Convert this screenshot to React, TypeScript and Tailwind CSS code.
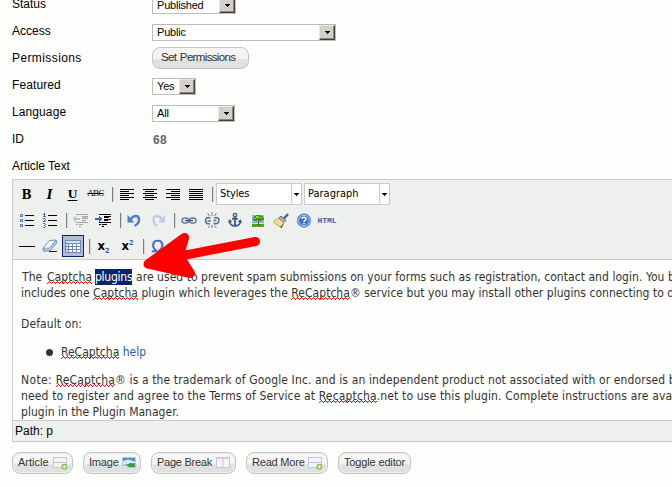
import type { ReactNode } from "react";

function Select({ value, className }: { value: string; className: string }) {
  return (
    <div className={`flex h-[17px] items-center border border-[#bdbdbd] bg-white pl-[4px] text-[11px] tracking-[-0.2px] text-black ${className}`}>
      <span className="flex-1">{value}</span>
      <span className="flex h-[15px] w-[16px] items-center justify-center border border-t-[#e8e6e0] border-l-[#e8e6e0] border-r-[#404040] border-b-[#404040] bg-[#d4d0c8] shadow-[inset_-1px_-1px_0_#87857f]">
        <svg width="5" height="3" viewBox="0 0 5 3" shapeRendering="crispEdges"><path d="M0 0h5v1H0zM1 1h3v1H1zM2 2h1v1H2z" /></svg>
      </span>
    </div>
  );
}

function Row({ label, className = "", children }: { label: string; className?: string; children?: ReactNode }) {
  return (
    <div className="flex h-[27px] items-center">
      <span className={`w-[140px] pb-[2px] text-[12px] whitespace-nowrap text-black ${className}`}>{label}</span>
      <div className="flex items-center pt-[2px]">{children}</div>
    </div>
  );
}

function Cell({ children, className = "" }: { children: ReactNode; className?: string }) {
  return <span className={`flex h-[24px] w-[23px] shrink-0 items-center justify-center ${className}`}>{children}</span>;
}

function Sep() {
  return (
    <span className="flex h-[24px] w-[8px] shrink-0 items-center pl-[5px]">
      <span className="h-[15px] w-[2px] border-l border-l-[#7d7a8c] bg-[#dcd8d8]" />
    </span>
  );
}

function Icon({ children, crisp = true }: { children: ReactNode; crisp?: boolean }) {
  return (
    <svg width="20" height="20" viewBox="0 0 20 20" fill="none" shapeRendering={crisp ? "crispEdges" : "auto"}>
      {children}
    </svg>
  );
}

function Align({ d }: { d: string }) {
  return <Icon><path stroke="#000" d={d} /></Icon>;
}

function ListBox({ label, className }: { label: string; className: string }) {
  return (
    <div className={`flex h-[22px] items-center border border-[#c9cccb] bg-white text-[11px] text-black ${className}`}>
      <span className="flex-1 pt-px pl-[3px]">{label}</span>
      <span className="flex h-full w-[10px] items-center justify-center border-l border-[#c9cccb]">
        <svg width="5" height="3" viewBox="0 0 5 3" shapeRendering="crispEdges"><path d="M0 0h5v1H0zM1 1h3v1H1zM2 2h1v1H2z" /></svg>
      </span>
    </div>
  );
}

/* Pixel zigzag, 4px period, long enough for the widest flagged word */
const zigzag = Array.from({ length: 20 }, (_, i) => {
  const x = i * 4;
  return `M${x} 2h1v1h-1zM${x + 1} 1h1v1h-1zM${x + 2} 0h1v1h-1zM${x + 3} 1h1v1h-1z`;
}).join("");

/* Misspelled word */
function Sp({ children }: { children: ReactNode }) {
  return (
    <span className="relative">
      {children}
      <svg className="absolute bottom-0 left-0 h-[3px] w-full overflow-hidden" shapeRendering="crispEdges">
        <path d={zigzag} fill="#f00" />
      </svg>
    </span>
  );
}

function Button({ label, className, children }: { label: string; className: string; children?: ReactNode }) {
  return (
    <div className={`flex h-[22px] shrink-0 items-center justify-between rounded-[8px] border border-[#c2c4c4] bg-linear-to-b from-[#f6f6f6] from-50% to-[#dfe1e0] to-60% pr-[4px] pl-[5px] text-[11px] whitespace-nowrap text-[#333] shadow-[inset_0_0_0_1px_#eeefee] ${className}`}>
      <span className="pb-[2px]">{label}</span>
      {children}
    </div>
  );
}

function PageIcon({ plus, split }: { plus?: boolean; split?: boolean }) {
  return (
    <svg width="15" height="13" viewBox="0 0 15 13">
      <rect x=".5" y=".5" width="13" height="10" fill="#f3f3fa" stroke="#c6c6d4" />
      {split ? <path d="M1 1.5h12" stroke="#d5d5e2" /> : <path d="M1 5.5h12" stroke="#c2c2d2" />}
      {split && <path d="M7 1v9" stroke="#c6c6d4" />}
      {plus && <circle cx="11.3" cy="9.7" r="2.9" fill="#7cc43a" />}
      {plus && <path d="M11.3 8v3.4M9.6 9.7h3.4" stroke="#fff" strokeWidth="1.2" />}
    </svg>
  );
}

export default function App() {
  return (
    <div className="relative h-[487px] w-[672px] overflow-hidden bg-[#fefefd] font-['Liberation_Sans',Arial,sans-serif]">
      <div className="-mt-[9px] pl-[12px]">
        <Row label="Status" className="pt-px"><Select value="Published" className="w-[84px]" /></Row>
        <Row label="Access"><Select value="Public" className="w-[184px]" /></Row>
        <Row label="Permissions" className="tracking-[0.4px]">
          <div className="-mt-[3px] flex h-[22px] w-[97px] items-center rounded-[8px] border border-[#c2c4c4] bg-linear-to-b from-[#f4f4f4] from-50% to-[#dfe1e0] to-60% pl-[8px] text-[11.500px] tracking-[-0.65px] whitespace-nowrap text-[#333] [word-spacing:1px]">
            Set Permissions
          </div>
        </Row>
        <Row label="Featured" className="tracking-[0.1px]"><Select value="Yes" className="w-[44px]" /></Row>
        <Row label="Language" className="tracking-[0.1px]"><Select value="All" className="w-[83px]" /></Row>
        <Row label="ID"><span className="-mt-[2px] pl-px text-[12px] font-bold tracking-[0.4px] text-[#666]">68</span></Row>
        <Row label="Article Text" className="tracking-[-0.05px]" />
      </div>

      <div className="-mt-px ml-[12px] h-[263px] w-[700px] border border-[#c9cccb]">
        <div className="h-[80px] border-b border-[#c9cccb] bg-[#eef0ee] pt-px pl-[2px] font-['DejaVu_Sans_Condensed','DejaVu_Sans',sans-serif]">
          <div className="flex h-[26px] items-center">
            <Cell className="pt-[2px] font-['DejaVu_Serif',serif] text-[12px] font-bold">B</Cell>
            <Cell className="pt-[2px] font-['DejaVu_Serif',serif] text-[12px] font-bold italic">I</Cell>
            <Cell className="pt-px font-['Liberation_Serif',serif] text-[13.500px] font-bold underline underline-offset-2">U</Cell>
            <Cell className="font-['Liberation_Serif',serif] text-[9px] tracking-[-0.7px] line-through">ABC</Cell>
            <Sep />
            <Cell><Align d="M3 5.5h14M3 7.5h9M3 9.5h14M3 11.5h9M3 13.5h14M3 15.5h9" /></Cell>
            <Cell><Align d="M3 5.5h14M5 7.5h9M3 9.5h14M5 11.5h9M3 13.5h14M5 15.5h9" /></Cell>
            <Cell><Align d="M3 5.5h14M8 7.5h9M3 9.5h14M8 11.5h9M3 13.5h14M8 15.5h9" /></Cell>
            <Cell><Align d="M3 5.5h14M3 7.5h14M3 9.5h14M3 11.5h14M3 13.5h14M3 15.5h14" /></Cell>
            <Sep />
            <ListBox label="Styles" className="ml-px w-[86px] tracking-[-0.1px]" />
            <ListBox label="Paragraph" className="ml-[2px] w-[86px]" />
          </div>

          <div className="flex h-[26px] items-center">
            <Cell>
              <Icon>
                <path stroke="#000" d="M8 5.5h9M8 10.5h9M8 15.5h9" />
                <path fill="#5f86b8" d="M3 4h3v3H3zM3 9h3v3H3zM3 14h3v3H3z" />
                <path fill="#b9cbe4" d="M4 5h1v1H4zM4 10h1v1H4zM4 15h1v1H4z" />
              </Icon>
            </Cell>
            <Cell>
              <Icon>
                <path stroke="#000" d="M8 5.5h9M8 10.5h9M8 15.5h9" />
                <path fill="#3d6bc4" d="M4 3h1v4H4zM3 4h1v1H3zM3 6h3v1H3zM3 8h2v1H3zM5 9h1v1H5zM4 10h1v1H4zM3 11h3v1H3zM3 13h2v1H3zM5 14h1v1H5zM4 15h1v1H4zM5 16h1v1H5zM3 17h2v1H3z" />
              </Icon>
            </Cell>
            <Sep />
            <Cell>
              <Icon>
                <path stroke="#a5a5a5" d="M5 4.5h12M11 6.5h6M11 8.5h6M11 10.5h4M5 12.5h12M5 14.5h2M8 14.5h4M8 16.5h2" />
                <path stroke="#a5a5a5" d="M11 7.5h6M11 11.5h2" opacity=".5" />
                <path fill="#b5c4e4" d="M1 9l4-3v2h4v2H5v2z" />
              </Icon>
            </Cell>
            <Cell>
              <Icon>
                <path stroke="#000" d="M5 4.5h12M10 6.5h7M10 7.5h5M10 9.5h7M10 10.5h4M5 12.5h12M5 14.5h2M8 14.5h5M8 16.5h2" />
                <path fill="#2f62cf" d="M9 9L5 5.500V8H1v2h4v2.500z" />
              </Icon>
            </Cell>
            <Sep />
            <Cell>
              <Icon crisp={false}>
                <path stroke="#4d7fd0" strokeWidth="2.400" d="M5.500 9.500C8 5.500 13.500 4.500 14 9c.2 3-1.500 5.500-4.500 7" />
                <path fill="#4d7fd0" d="M2.500 5v7.500h7z" />
              </Icon>
            </Cell>
            <Cell>
              <Icon crisp={false}>
                <path stroke="#bccbe3" strokeWidth="2.200" d="M14 9.500C12 5.500 6 4.500 5.500 9c-.2 3 1 5.500 3.500 7" />
                <path fill="#bccbe3" d="M17 5v7.500h-7z" />
              </Icon>
            </Cell>
            <Sep />
            <Cell>
              <Icon crisp={false}>
                <rect x="3" y="8" width="6.500" height="5" rx="2.500" stroke="#6a80a2" strokeWidth="1.500" />
                <rect x="10.500" y="8" width="6.500" height="5" rx="2.500" stroke="#6a80a2" strokeWidth="1.500" />
                <path d="M6 10.500h8" stroke="#3e5880" strokeWidth="1.400" />
              </Icon>
            </Cell>
            <Cell>
              <Icon crisp={false}>
                <path stroke="#5c7396" strokeWidth="1.600" d="M8.500 8C5 7 3.500 8 3.500 11c0 2.500 2.500 3.300 4.500 2.500M5.500 11H9M12 8c3.500-1 5 0 5 2.500 0 3-2.500 3.500-5.500 3M11.500 10.500h3" />
                <path stroke="#6d7f9a" d="M10 2v4M5.500 3l2 3M14.500 3l-2 3M10 15v3M6 18l2-2.500M14.500 18l-2-2.500" />
              </Icon>
            </Cell>
            <Cell>
              <Icon crisp={false}>
                <circle cx="10" cy="5" r="1.700" stroke="#415f8e" strokeWidth="1.300" />
                <path stroke="#415f8e" strokeWidth="1.900" d="M10 6.500V16M7 8.700h6M4.500 11c0 3 2.500 5 5.500 5s5.500-2 5.500-5" />
                <path fill="#415f8e" d="M3 12.500l1.500-3.500 3 3zM17 12.500L15.500 9l-3 3z" />
              </Icon>
            </Cell>
            <Cell>
              <Icon>
                <path fill="#f8fbf4" d="M3 4h14v14H3z" />
                <path fill="#83b6ea" d="M4 5h12v8H4z" />
                <path fill="#c8e6b0" d="M4 13h12v1H4z" />
                <path fill="#4ea51c" d="M4 14h12v3H4z" />
                <path fill="#3c9716" d="M8 5h5v1h2v2h1v2h-2v1h-3v-1H9v1H6v-1H5V8h1V6h2z" />
                <path fill="#8fd04c" d="M8 6h3v2H8zM12 7h2v1h-2zM6 8h2v1H6z" />
                <path fill="#80521f" d="M10 10h1v5h-1zM9 14h3v1H9z" />
              </Icon>
            </Cell>
            <Cell>
              <Icon crisp={false}>
                <path stroke="#596580" strokeWidth="2.600" d="M17 4l-4 4.500" />
                <path fill="#a9b6cf" stroke="#52617d" strokeWidth=".9" d="M10 6l5 4.500-2 2-5-4.500z" />
                <path fill="#f2dd9a" stroke="#b19340" strokeWidth=".8" d="M7.500 8l5.500 5-2.500 4.500C7 16 4 14 2.500 11.500z" />
                <path fill="#59491d" d="M9 17.300L10.500 18l2.500-5z" />
              </Icon>
            </Cell>
            <Cell>
              <Icon crisp={false}>
                <circle cx="10" cy="10.500" r="6.700" fill="#3a72cb" stroke="#7b9cd0" />
                <circle cx="10" cy="10.500" r="5.300" stroke="#dbe7fa" strokeWidth=".8" />
                <path stroke="#fff" strokeWidth="1.500" d="M8 9c0-2.400 4-2.300 4 0 0 1.300-2 1.300-2 2.800M10 12.800v1.400" />
              </Icon>
            </Cell>
            <Cell><span className="pt-[2px] pl-px font-['Liberation_Mono',monospace] text-[8px] font-bold text-[#3c5fa9]">HTML</span></Cell>
          </div>

          <div className="flex h-[26px] items-center">
            <Cell><Icon><path stroke="#000" d="M2 10.500h16" /></Icon></Cell>
            <Cell>
              <Icon crisp={false}>
                <path fill="#f4f8fd" stroke="#6e8db8" d="M9.500 4.500L16 4l.5 3-6.500 7.500-6.500.5-.5-3z" />
                <path fill="#b3c8e4" stroke="#6e8db8" strokeWidth=".7" d="M3 12l6 .2L16 4l.5 3-6.500 7.500-6.500.5z" />
                <path stroke="#222" d="M9 15.500h8" />
              </Icon>
            </Cell>
            <Cell>
              <span className="flex h-[22px] w-[22px] items-center justify-center border border-[#0a246a] bg-[#b6bdd2]">
                <Icon>
                  <path fill="#6f8bbd" d="M2 4h16v13H2z" />
                  <path fill="#d5e2f5" d="M3 5h14v2H3zM3 8h2v2H3zM3 11h2v2H3zM3 14h2v2H3z" />
                  <path fill="#fff" d="M6 8h3v2H6zM10 8h3v2h-3zM14 8h3v2h-3zM6 11h3v2H6zM10 11h3v2h-3zM14 11h3v2h-3zM6 14h3v2H6zM10 14h3v2h-3zM14 14h3v2h-3z" />
                </Icon>
              </span>
            </Cell>
            <Sep />
            <Cell className="font-bold">
              <span className="text-[13px] leading-[16px]">x</span>
              <span className="pt-[9px] text-[7px] leading-[8px] text-[#2b5db8]">2</span>
            </Cell>
            <Cell className="pl-[2px] font-bold">
              <span className="text-[13px] leading-[16px]">x</span>
              <span className="pb-[7px] text-[7px] leading-[8px] text-[#2b5db8]">2</span>
            </Cell>
            <Sep />
            <Cell className="pt-px font-['Liberation_Sans',sans-serif] text-[17px] text-[#3f68b8] [-webkit-text-stroke:0.4px_#3f68b8]">Ω</Cell>
          </div>
        </div>

        <div className="h-[160px] w-[659px] overflow-hidden pt-[9px] pl-[8px] font-['DejaVu_Sans_Condensed','DejaVu_Sans',sans-serif] text-[12px] leading-[16px] whitespace-pre text-[#333]">
          <p className="flex tracking-[0.06px]">
            <span className="w-[26px] shrink-0 pl-px">The </span>
            <span className="w-[48px] shrink-0"><Sp>Captcha</Sp></span>
            <span className="h-[16px] w-[37px] shrink-0 bg-[#0a246a] tracking-[-0.25px] text-white">plugins</span>
            <span className="shrink-0 pl-[4px] tracking-[0.05px]">are used to prevent spam submissions on your forms such as registration, contact and login. You b</span>
          </p>
          <p className="tracking-[0.03px]">includes one <Sp>Captcha</Sp> plugin which leverages the <Sp>ReCaptcha</Sp>® service but you may install other plugins connecting to d</p>
          <p className="mt-[15px] tracking-[0.1px]">Default on:</p>
          <div className="mt-[12px] flex items-center">
            <span className="mr-[8px] ml-[25px] h-[7px] w-[7px] rounded-full bg-[#333]" />
            <p><Sp>ReCaptcha</Sp> <span className="text-[#2a5db0]">help</span></p>
          </div>
          <p className="mt-[12px] tracking-[0.12px]"><span className="tracking-[0.35px]">Note: </span><Sp>ReCaptcha</Sp>® is a the trademark of Google Inc. and is an independent product not associated with or endorsed b</p>
          <p className="tracking-[0.15px]">need to register and agree to the Terms of Service at <Sp>Recaptcha</Sp>.net to use this plugin. Complete instructions are avai</p>
          <p className="tracking-[0.02px]">plugin in the Plugin Manager.</p>
        </div>

        <div className="flex h-[21px] items-center border-t border-[#c9cccb] bg-[#eef0ee] pl-[2px] text-[12px] text-black">Path: p</div>
      </div>

      <div className="mt-[10px] ml-[12px] flex gap-[10px]">
        <Button label="Article" className="w-[61px]"><PageIcon plus /></Button>
        <Button label="Image" className="w-[58px] tracking-[-0.2px]">
          <svg width="14" height="12" viewBox="0 0 14 12">
            <rect x=".5" y=".5" width="13" height="10" fill="#4d93c4" stroke="#b9cad8" />
            <path fill="#d7ebf5" d="M1 4l5-1.500 7 2V6L6 7 1 8z" />
            <path fill="#3d9a3e" d="M3 10l5-4 5 1v3z" />
            <path fill="#f2f6f2" d="M1 8.500l6 .5-3 1.500H1z" />
          </svg>
        </Button>
        <Button label="Page Break" className="w-[85px] tracking-[-0.25px]"><PageIcon split /></Button>
        <Button label="Read More" className="w-[82px] tracking-[-0.2px]"><PageIcon plus /></Button>
        <Button label="Toggle editor" className="w-[73px] tracking-[-0.15px]" />
      </div>

      <svg className="absolute top-[225px] left-[135px]" width="135" height="60" viewBox="135 225 135 60">
        <path d="M148 264L184.500 237.500L179.500 256L190.500 273.500Z" fill="#f00" stroke="#f00" strokeWidth="9" strokeLinejoin="round" />
        <path d="M178 256.500L255.500 241.500" stroke="#f00" strokeWidth="9" strokeLinecap="round" />
      </svg>
    </div>
  );
}
